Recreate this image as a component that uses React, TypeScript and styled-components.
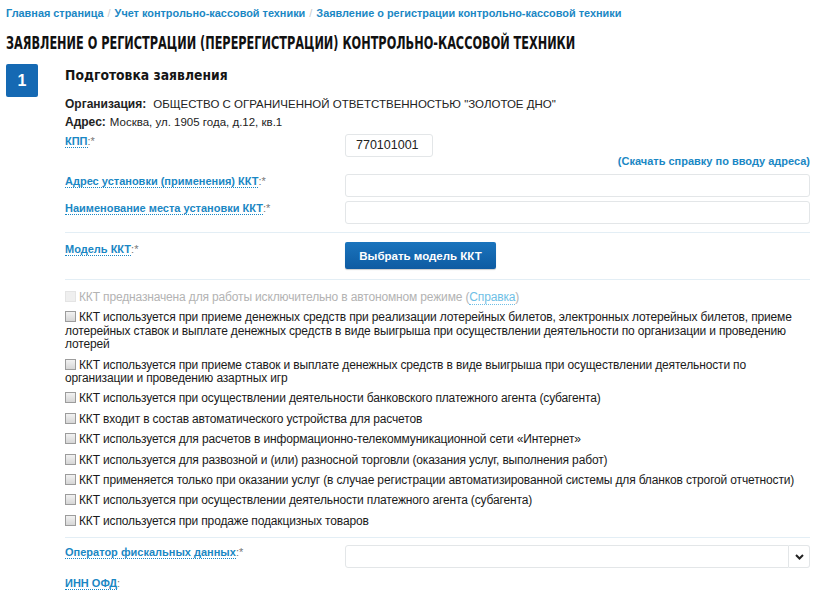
import React from "react";
import styled, { createGlobalStyle } from "styled-components";

const Global = createGlobalStyle`
  html, body { margin: 0; padding: 0; background: #fff; }
  body { font-family: "Liberation Sans", Arial, sans-serif; color: #222; }
`;

const Page = styled.div`
  padding: 4px 6px 0 6px;
  width: 834px;
  box-sizing: border-box;
  overflow: hidden;
`;

const Crumbs = styled.nav`
  font-size: 10.9px;
  font-weight: bold;
  color: #1a87c4;
  height: 18px;
  line-height: 18px;
  white-space: nowrap;
`;

const Sep = styled.span`
  color: #c8c8c8;
  font-weight: normal;
  margin: 0 4px;
`;

const Title = styled.h1`
  margin: 11px 0 0 0;
  height: 20px;
  font-family: "DejaVu Sans", sans-serif;
  font-weight: bold;
  font-size: 18.5px;
  line-height: 20px;
  color: #111;
  white-space: nowrap;
`;

const Condensed = styled.span<{ k: number }>`
  display: inline-block;
  transform: scaleX(${(p) => p.k});
  transform-origin: left center;
`;

const Step = styled.section`
  display: flex;
  gap: 27px;
  margin-top: 11px;
`;

const Badge = styled.div`
  flex: 0 0 32px;
  height: 33px;
  border-radius: 2px;
  background: #1569b3;
  color: #fff;
  font-weight: bold;
  font-size: 16px;
  display: flex;
  align-items: center;
  justify-content: center;
`;

const Body = styled.div`
  width: 745px;
`;

const StepTitle = styled.h2`
  margin: 2px 0 0 0;
  height: 18px;
  font-family: "DejaVu Sans", sans-serif;
  font-weight: bold;
  font-size: 14.5px;
  line-height: 18px;
  color: #151515;
  white-space: nowrap;
`;

const Info = styled.div`
  margin-top: 11px;
  font-size: 11.5px;
  line-height: 18px;
`;

const InfoKey = styled.b<{ gap?: number }>`
  font-size: 12px;
  margin-right: ${(p) => p.gap ?? 4}px;
`;

const FieldRow = styled.div<{ h: number; top?: number }>`
  display: grid;
  grid-template-columns: 280px 465px;
  min-height: ${(p) => p.h}px;
  margin-top: ${(p) => p.top ?? 0}px;
  align-items: start;
`;

const Label = styled.div`
  font-size: 11px;
  font-weight: bold;
  line-height: 14px;
`;

const LabelLink = styled.span`
  color: #1a87c4;
  border-bottom: 1px dotted #1a87c4;
`;

const Req = styled.span`
  color: #777;
  font-weight: normal;
`;

const Input = styled.div<{ w?: number }>`
  box-sizing: border-box;
  width: ${(p) => (p.w ? `${p.w}px` : "100%")};
  height: 23px;
  border: 1px solid #e3e6e8;
  border-radius: 3px;
  font-size: 12.5px;
  line-height: 21px;
  padding-left: 10px;
  color: #222;
`;

const HelpLink = styled.div`
  text-align: right;
  font-size: 11px;
  font-weight: bold;
  color: #1a87c4;
  line-height: 14px;
  margin-top: -3px;
`;

const Divider = styled.hr`
  margin: 0;
  border: 0;
  border-top: 1px solid #e3eef5;
`;

const Button = styled.button`
  width: 151px;
  height: 27px;
  border: 0;
  border-radius: 2px;
  background: linear-gradient(#1a74bd, #0e5ba2);
  color: #fff;
  font-family: "Liberation Sans", Arial, sans-serif;
  font-weight: bold;
  font-size: 11.5px;
  cursor: pointer;
  box-shadow: 0 1px 1px rgba(0, 0, 0, 0.2);
`;

const Checks = styled.div`
  padding: 11px 0 9px 0;
  display: flex;
  flex-direction: column;
  gap: 7px;
`;

const CheckLine = styled.label<{ disabled?: boolean }>`
  display: block;
  font-size: 12px;
  letter-spacing: -0.15px;
  line-height: 13.4px;
  color: ${(p) => (p.disabled ? "#b3b3b3" : "#1a1a1a")};
`;

const Box = styled.span<{ disabled?: boolean }>`
  display: inline-block;
  width: 11px;
  height: 11px;
  box-sizing: border-box;
  border: 1px solid ${(p) => (p.disabled ? "#e4e4e4" : "#9c9c9c")};
  background: ${(p) => (p.disabled ? "#efefef" : "linear-gradient(#f2f2f2, #d6d6d6)")};
  margin-right: 3px;
  vertical-align: -1px;
`;

const SmallLink = styled.span`
  color: #6fbfe6;
  border-bottom: 1px dotted #6fbfe6;
`;

const SelectWrap = styled.div`
  display: flex;
  height: 23px;
`;

const SelectBox = styled.div`
  flex: 1;
  border: 1px solid #e3e6e8;
  border-radius: 3px 0 0 3px;
`;

const SelectBtn = styled.div`
  width: 20px;
  border: 1px solid #e3e6e8;
  border-left: 0;
  border-radius: 0 3px 3px 0;
  display: flex;
  align-items: center;
  justify-content: center;
`;

const checks: { text: React.ReactNode; disabled?: boolean }[] = [
  {
    disabled: true,
    text: (
      <>
        ККТ предназначена для работы исключительно в автономном режиме (<SmallLink>Справка</SmallLink>)
      </>
    ),
  },
  {
    text:
      "ККТ используется при приеме денежных средств при реализации лотерейных билетов, электронных лотерейных билетов, приеме лотерейных ставок и выплате денежных средств в виде выигрыша при осуществлении деятельности по организации и проведению лотерей",
  },
  {
    text:
      "ККТ используется при приеме ставок и выплате денежных средств в виде выигрыша при осуществлении деятельности по организации и проведению азартных игр",
  },
  { text: "ККТ используется при осуществлении деятельности банковского платежного агента (субагента)" },
  { text: "ККТ входит в состав автоматического устройства для расчетов" },
  { text: "ККТ используется для расчетов в информационно-телекоммуникационной сети «Интернет»" },
  { text: "ККТ используется для развозной и (или) разносной торговли (оказания услуг, выполнения работ)" },
  {
    text:
      "ККТ применяется только при оказании услуг (в случае регистрации автоматизированной системы для бланков строгой отчетности)",
  },
  { text: "ККТ используется при осуществлении деятельности платежного агента (субагента)" },
  { text: "ККТ используется при продаже подакцизных товаров" },
];

export default function App() {
  return (
    <Page>
      <Global />
      <Crumbs>
        Главная страница<Sep>/</Sep>Учет контрольно-кассовой техники<Sep>/</Sep>Заявление о регистрации
        контрольно-кассовой техники
      </Crumbs>
      <Title>
        <Condensed k={0.61}>ЗАЯВЛЕНИЕ О РЕГИСТРАЦИИ (ПЕРЕРЕГИСТРАЦИИ) КОНТРОЛЬНО-КАССОВОЙ ТЕХНИКИ</Condensed>
      </Title>
      <Step>
        <Badge>1</Badge>
        <Body>
          <StepTitle>
            <Condensed k={0.855}>Подготовка заявления</Condensed>
          </StepTitle>
          <Info>
            <div>
              <InfoKey gap={7}>Организация:</InfoKey>ОБЩЕСТВО С ОГРАНИЧЕННОЙ ОТВЕТСТВЕННОСТЬЮ "ЗОЛОТОЕ ДНО"
            </div>
            <div>
              <InfoKey>Адрес:</InfoKey>Москва, ул. 1905 года, д.12, кв.1
            </div>
          </Info>
          <FieldRow h={23} top={3}>
            <Label>
              <LabelLink>КПП</LabelLink>
              <Req>:*</Req>
            </Label>
            <Input w={88}>770101001</Input>
          </FieldRow>
          <HelpLink>(Скачать справку по вводу адреса)</HelpLink>
          <FieldRow h={27} top={6}>
            <Label>
              <LabelLink>Адрес установки (применения) ККТ</LabelLink>
              <Req>:*</Req>
            </Label>
            <Input />
          </FieldRow>
          <FieldRow h={31}>
            <Label>
              <LabelLink>Наименование места установки ККТ</LabelLink>
              <Req>:*</Req>
            </Label>
            <Input />
          </FieldRow>
          <Divider />
          <FieldRow h={37} top={9}>
            <Label>
              <LabelLink>Модель ККТ</LabelLink>
              <Req>:*</Req>
            </Label>
            <Button>Выбрать модель ККТ</Button>
          </FieldRow>
          <Divider />
          <Checks>
            {checks.map((c, i) => (
              <CheckLine key={i} disabled={c.disabled}>
                <Box disabled={c.disabled} />
                {c.text}
              </CheckLine>
            ))}
          </Checks>
          <Divider />
          <FieldRow h={31} top={7}>
            <Label>
              <LabelLink>Оператор фискальных данных</LabelLink>
              <Req>:*</Req>
            </Label>
            <SelectWrap>
              <SelectBox />
              <SelectBtn>
                <svg width="9" height="6" viewBox="0 0 9 6">
                  <path d="M1 1 L4.5 4.5 L8 1" stroke="#222" strokeWidth="2" fill="none" />
                </svg>
              </SelectBtn>
            </SelectWrap>
          </FieldRow>
          <FieldRow h={20}>
            <Label>
              <LabelLink>ИНН ОФД</LabelLink>
              <Req>:</Req>
            </Label>
          </FieldRow>
        </Body>
      </Step>
    </Page>
  );
}
